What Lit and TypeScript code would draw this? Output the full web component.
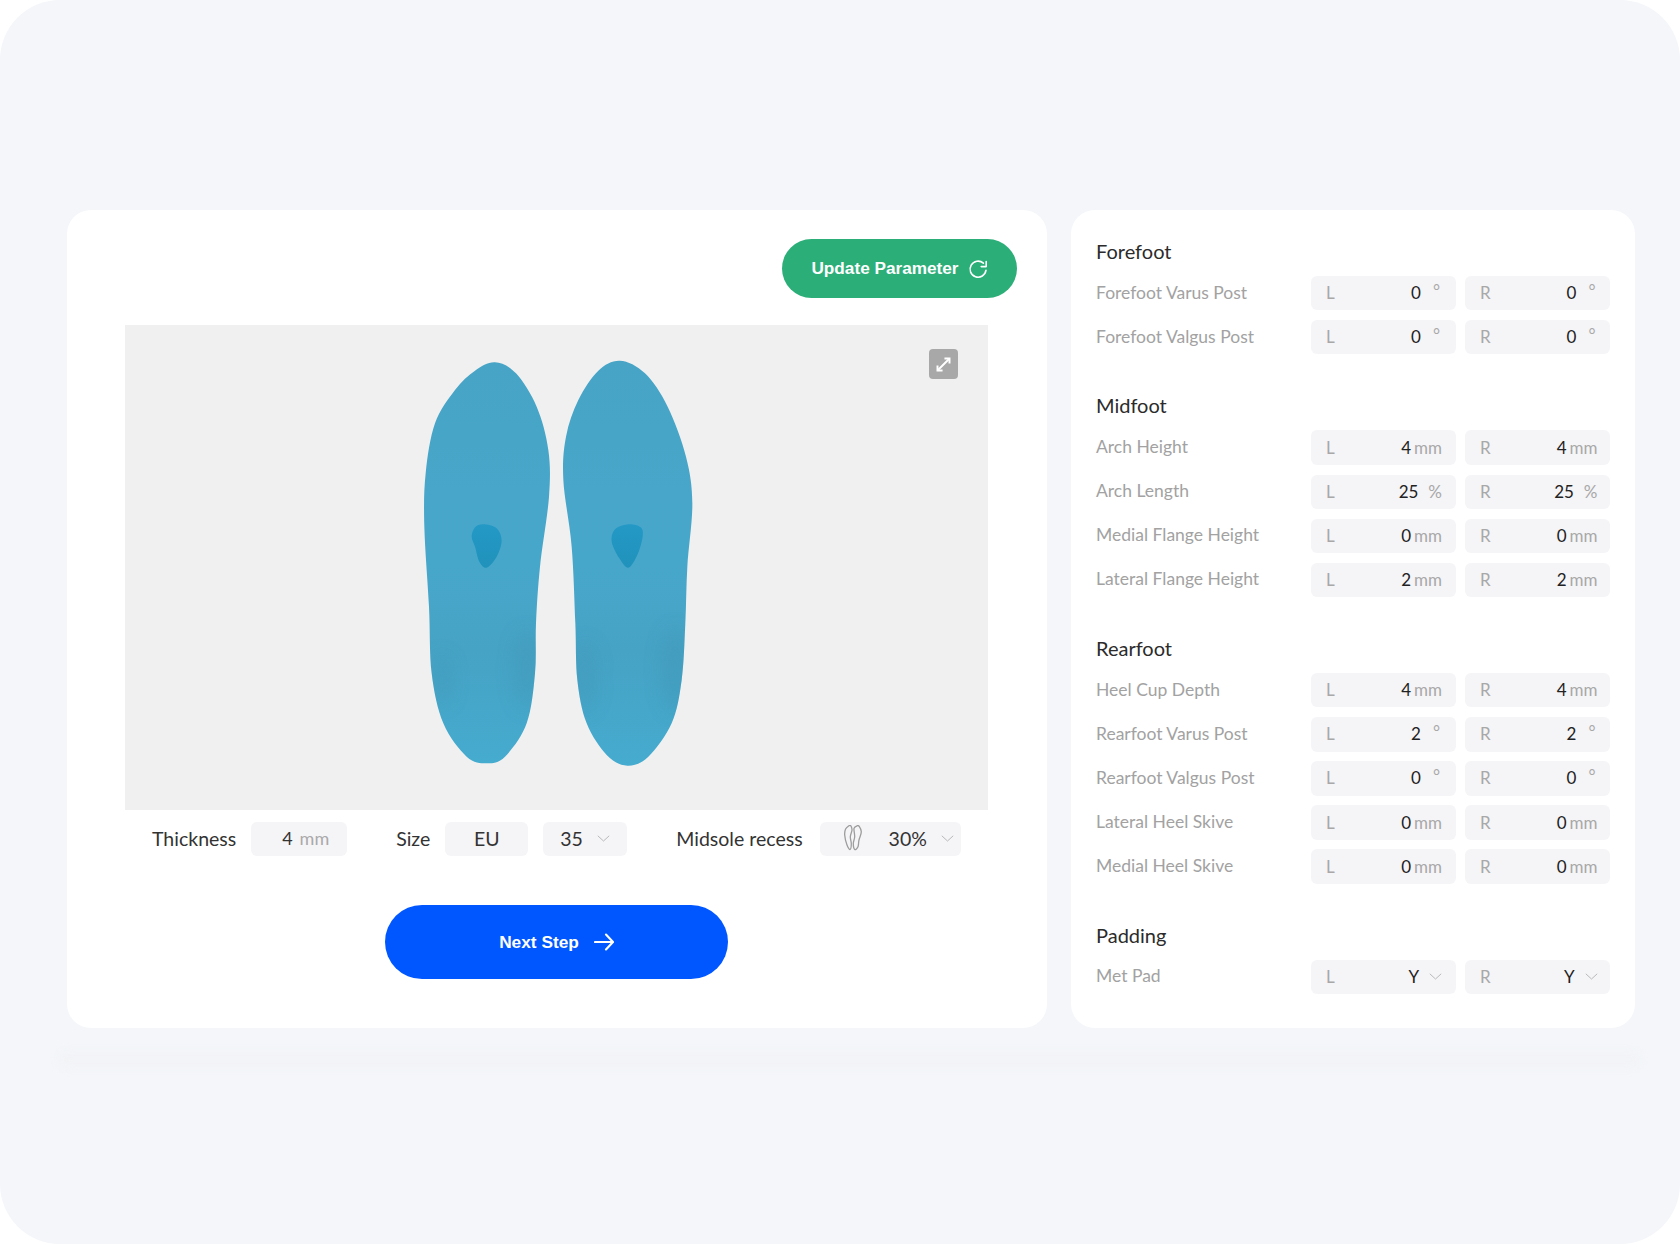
import { LitElement, html, css, svg } from "lit";
import { customElement } from "lit/decorators.js";

type Pt = [number, number];
type Field = { v: string; u: "mm" | "deg" | "pct" | "sel" };
type Row = { label: string; f: Field };
type Section = { title: string; rows: Row[] };

const mm = (v: string): Field => ({ v, u: "mm" });
const deg = (v: string): Field => ({ v, u: "deg" });
const pct = (v: string): Field => ({ v, u: "pct" });

const SECTIONS: Section[] = [
  { title: "Forefoot", rows: [
    { label: "Forefoot Varus Post", f: deg("0") },
    { label: "Forefoot Valgus Post", f: deg("0") },
  ] },
  { title: "Midfoot", rows: [
    { label: "Arch Height", f: mm("4") },
    { label: "Arch Length", f: pct("25") },
    { label: "Medial Flange Height", f: mm("0") },
    { label: "Lateral Flange Height", f: mm("2") },
  ] },
  { title: "Rearfoot", rows: [
    { label: "Heel Cup Depth", f: mm("4") },
    { label: "Rearfoot Varus Post", f: deg("2") },
    { label: "Rearfoot Valgus Post", f: deg("0") },
    { label: "Lateral Heel Skive", f: mm("0") },
    { label: "Medial Heel Skive", f: mm("0") },
  ] },
  { title: "Padding", rows: [
    { label: "Met Pad", f: { v: "Y", u: "sel" } },
  ] },
];

// Closed Catmull-Rom spline through the traced outline points
function smooth(p: Pt[]): string {
  const n = p.length;
  let d = `M${p[0][0]} ${p[0][1]}`;
  for (let i = 0; i < n; i++) {
    const a = p[(i - 1 + n) % n], b = p[i], c = p[(i + 1) % n], e = p[(i + 2) % n];
    const c1x = b[0] + (c[0] - a[0]) / 6, c1y = b[1] + (c[1] - a[1]) / 6;
    const c2x = c[0] - (e[0] - b[0]) / 6, c2y = c[1] - (e[1] - b[1]) / 6;
    d += `C${c1x.toFixed(1)} ${c1y.toFixed(1)} ${c2x.toFixed(1)} ${c2y.toFixed(1)} ${c[0]} ${c[1]}`;
  }
  return d + "Z";
}

const LEFT: Pt[] = [[345,67],[408,100],[470,200],[505,330],[507,470],[480,680],[468,850],[465,1000],[440,1150],[375,1250],[320,1270],[260,1250],[190,1150],[155,1000],[147,800],[133,560],[137,400],[165,250],[225,150],[285,92]];
const RIGHT: Pt[] = [[720,62],[795,100],[863,200],[918,350],[937,490],[922,680],[916,850],[905,1020],[875,1150],[805,1250],[742,1277],[680,1245],[620,1150],[592,1020],[586,850],[575,620],[550,420],[558,290],[595,180],[655,92]];
const PAD_L: Pt[] = [[310,553],[350,565],[365,602],[350,650],[320,683],[298,665],[285,620],[275,590],[285,562]];
const PAD_R: Pt[] = [[745,553],[782,562],[788,590],[772,645],[745,683],[718,655],[695,605],[705,568]];

const MID_A: Pt[] = [[5,.7],[1.6,4],[.7,10],[3,20],[6,24.5],[7.3,18.5],[6.3,11.7],[8,5],[6.7,.7]];
const MID_B: Pt[] = [[13.3,.7],[10,3.3],[10.7,11.7],[9.3,18.3],[10.7,24.5],[14,21.7],[15,15],[17.3,6.7],[15.2,1.4]];

const chevron = html`<svg class="chev" viewBox="0 0 13 7" width="13" height="7"><path d="M.8.8 6.5 6 12.2.8" fill="none" stroke="#b8b8bc" stroke-width="1"/></svg>`;

function insoles() {
  const l = smooth(LEFT), r = smooth(RIGHT);
  return html`<svg class="soles" viewBox="0 0 1020 1320" width="340" height="440">
    <defs>
      <linearGradient id="base" x1="0" y1="0" x2="0" y2="1">
        <stop offset="0" stop-color="#47a4c6"/>
        <stop offset=".5" stop-color="#47a7cb"/>
        <stop offset=".72" stop-color="#46a3c5"/>
        <stop offset="1" stop-color="#45abcf"/>
      </linearGradient>
      <linearGradient id="pad" x1="0" y1="0" x2="0" y2="1">
        <stop offset="0" stop-color="#2499c6"/>
        <stop offset="1" stop-color="#2092bb"/>
      </linearGradient>
      <filter id="soft" x="-100%" y="-60%" width="300%" height="220%"><feGaussianBlur stdDeviation="28"/></filter>
      <clipPath id="cl"><path d="${l}"/></clipPath>
      <clipPath id="cr"><path d="${r}"/></clipPath>
    </defs>
    ${svg`
      <path d="${l}" fill="url(#base)"/>
      <path d="${r}" fill="url(#base)"/>
      <g clip-path="url(#cl)">
        <g filter="url(#soft)" fill="#4193b3" opacity=".4">
          <ellipse cx="440" cy="990" rx="34" ry="115"/>
          <ellipse cx="185" cy="1020" rx="26" ry="75"/>
        </g>
      </g>
      <g clip-path="url(#cr)">
        <g filter="url(#soft)" fill="#4193b3" opacity=".45">
          <ellipse cx="615" cy="1010" rx="28" ry="105"/>
          <ellipse cx="885" cy="990" rx="36" ry="125"/>
        </g>
      </g>
      <path d="${smooth(PAD_L)}" fill="url(#pad)"/>
      <path d="${smooth(PAD_R)}" fill="url(#pad)"/>
    `}
  </svg>`;
}

@customElement("app-root")
export class AppRoot extends LitElement {
  static styles = css`
    :host { display: block; width: 1680px; height: 1244px; background: #fff; font-family: "Lato", "Liberation Sans", sans-serif; }
    * { box-sizing: border-box; }
    .frame { height: 1244px; background: #f4f6fa; border-radius: 60px; padding: 210px 45px 0 67px; }
    .cards { display: flex; gap: 24px; height: 818px; }
    .card { background: #fff; border-radius: 24px; }
    .left { width: 980px; display: flex; flex-direction: column; padding: 29px 30px 0 58px; }
    .right { width: 564px; padding: 29px 25px 0; }

    .pill { border: 0; color: #fff; font-family: "Liberation Sans", Arial, sans-serif; font-weight: 700; display: flex; align-items: center; justify-content: center; border-radius: 999px; }
    .update { align-self: flex-end; width: 235px; height: 59px; background: #2bae78; font-size: 17.2px; gap: 9px; }
    .viewer { height: 485px; margin: 27px 29px 0 0; background: #f0f0f0; position: relative; display: flex; justify-content: center; align-items: flex-start; padding: 15px 14px 0 0; }
    .soles { display: block; }
    .expand { position: absolute; top: 24px; right: 30px; width: 29px; height: 30px; border-radius: 4px; background: #a8a8a8; display: flex; align-items: center; justify-content: center; }

    .controls { display: flex; align-items: center; height: 34px; margin: 12px 0 0; padding: 0 0 2px 27px; font-size: 19.5px; color: #333; }
    .clabel { white-space: nowrap; }
    .box { background: #f5f4f7; border-radius: 6px; height: 34px; padding-bottom: 2px; display: flex; align-items: center; flex: none; }
    .controls .box { margin-bottom: -2px; }
    .thick { width: 96px; margin-left: 15px; justify-content: flex-end; padding-right: 18px; font-size: 18px; }
    .thick .u { color: #aaa; margin-left: 7px; font-size: 18px; }
    .size { margin-left: 49px; }
    .eu { width: 83px; margin-left: 15px; justify-content: center; }
    .num { width: 84px; margin-left: 15px; padding-left: 17px; padding-right: 17px; justify-content: space-between; }
    .mid { margin-left: 49px; }
    .recess { width: 141px; margin-left: 17px; padding-left: 24px; padding-right: 7px; }
    .recess .pv { margin: 0 auto 0 27px; }
    .next { align-self: center; width: 343px; height: 74px; margin: 49px 29px 0 0; padding-bottom: 1px; background: #0057ff; font-size: 17.3px; gap: 15px; }

    h3 { margin: 0 0 9px; height: 28px; line-height: 24px; font-size: 20px; font-weight: 400; color: #2b2b2b; }
    .section + .section { margin-top: 39px; }
    .rows { display: grid; row-gap: 9.7px; }
    .row { display: grid; grid-template-columns: 1fr 145px 145px; column-gap: 9px; height: 34.4px; align-items: center; }
    .rlabel { font-size: 17.5px; color: #a2a2a2; white-space: nowrap; padding-bottom: 2px; }
    .field { height: 34.4px; background: #f5f4f7; border-radius: 6px; display: flex; align-items: center; padding: 0 14px 1px 15px; font-size: 17px; color: #222; }
    .field + .field { padding-right: 12.5px; }
    .side { margin-right: auto; color: #a8a8a8; }
    .unit { color: #a8a8a8; }
    .unit.mm { margin-left: 3px; }
    .unit.pct { margin-left: 10px; }
    .unit.deg { margin: 0 2px 0 12px; position: relative; top: -2px; }
    .chev { flex: none; display: block; }
    .field .chev { margin-left: 10px; }

    .glow { height: 15px; margin: 24px -5px 0 -8px; background: #f2f3f6; filter: blur(4px); border-radius: 8px; }
  `;

  private field(side: string, f: Field) {
    return html`<div class="field">
      <span class="side">${side}</span>
      <span>${f.v}</span>
      ${f.u === "sel" ? chevron
        : html`<span class="unit ${f.u}">${f.u === "mm" ? "mm" : f.u === "deg" ? "°" : "%"}</span>`}
    </div>`;
  }

  render() {
    return html`<div class="frame">
      <div class="cards">
        <section class="card left">
          <button class="pill update">Update Parameter
            <svg viewBox="0 0 20 20" width="20" height="20" fill="none" stroke="#fff" stroke-width="1.6" stroke-linecap="round" stroke-linejoin="round">
              <path d="M18 11.2A8 8 0 1 1 15.4 4.2"/><path d="M18.2 2.6v5h-5"/>
            </svg>
          </button>
          <div class="viewer">
            ${insoles()}
            <div class="expand">
              <svg viewBox="0 0 16 16" width="15" height="15" fill="none" stroke="#fff" stroke-width="2.1">
                <path d="M14.4 1.6 1.6 14.4"/><path d="M9 1.6h5.4V7"/><path d="M1.6 9v5.4H7"/>
              </svg>
            </div>
          </div>
          <div class="controls">
            <span class="clabel">Thickness</span>
            <div class="box thick"><span>4</span><span class="u">mm</span></div>
            <span class="clabel size">Size</span>
            <div class="box eu">EU</div>
            <div class="box num"><span>35</span>${chevron}</div>
            <span class="clabel mid">Midsole recess</span>
            <div class="box recess">
              <svg viewBox="0 0 18 26" width="18" height="26" fill="none" stroke="#9c9c9c" stroke-width="1.3">
                <path d="${smooth(MID_A)}"/><path d="${smooth(MID_B)}"/>
              </svg>
              <span class="pv">30%</span>${chevron}
            </div>
          </div>
          <button class="pill next">Next Step
            <svg viewBox="0 0 20 18" width="20" height="18" fill="none" stroke="#fff" stroke-width="2.1" stroke-linecap="round" stroke-linejoin="round">
              <path d="M1 9h18M12 1.5 19 9l-7 7.5"/>
            </svg>
          </button>
        </section>
        <section class="card right">
          ${SECTIONS.map((s) => html`<div class="section">
            <h3>${s.title}</h3>
            <div class="rows">
              ${s.rows.map((r) => html`<div class="row">
                <span class="rlabel">${r.label}</span>
                ${this.field("L", r.f)}
                ${this.field("R", r.f)}
              </div>`)}
            </div>
          </div>`)}
        </section>
      </div>
      <div class="glow"></div>
    </div>`;
  }
}
